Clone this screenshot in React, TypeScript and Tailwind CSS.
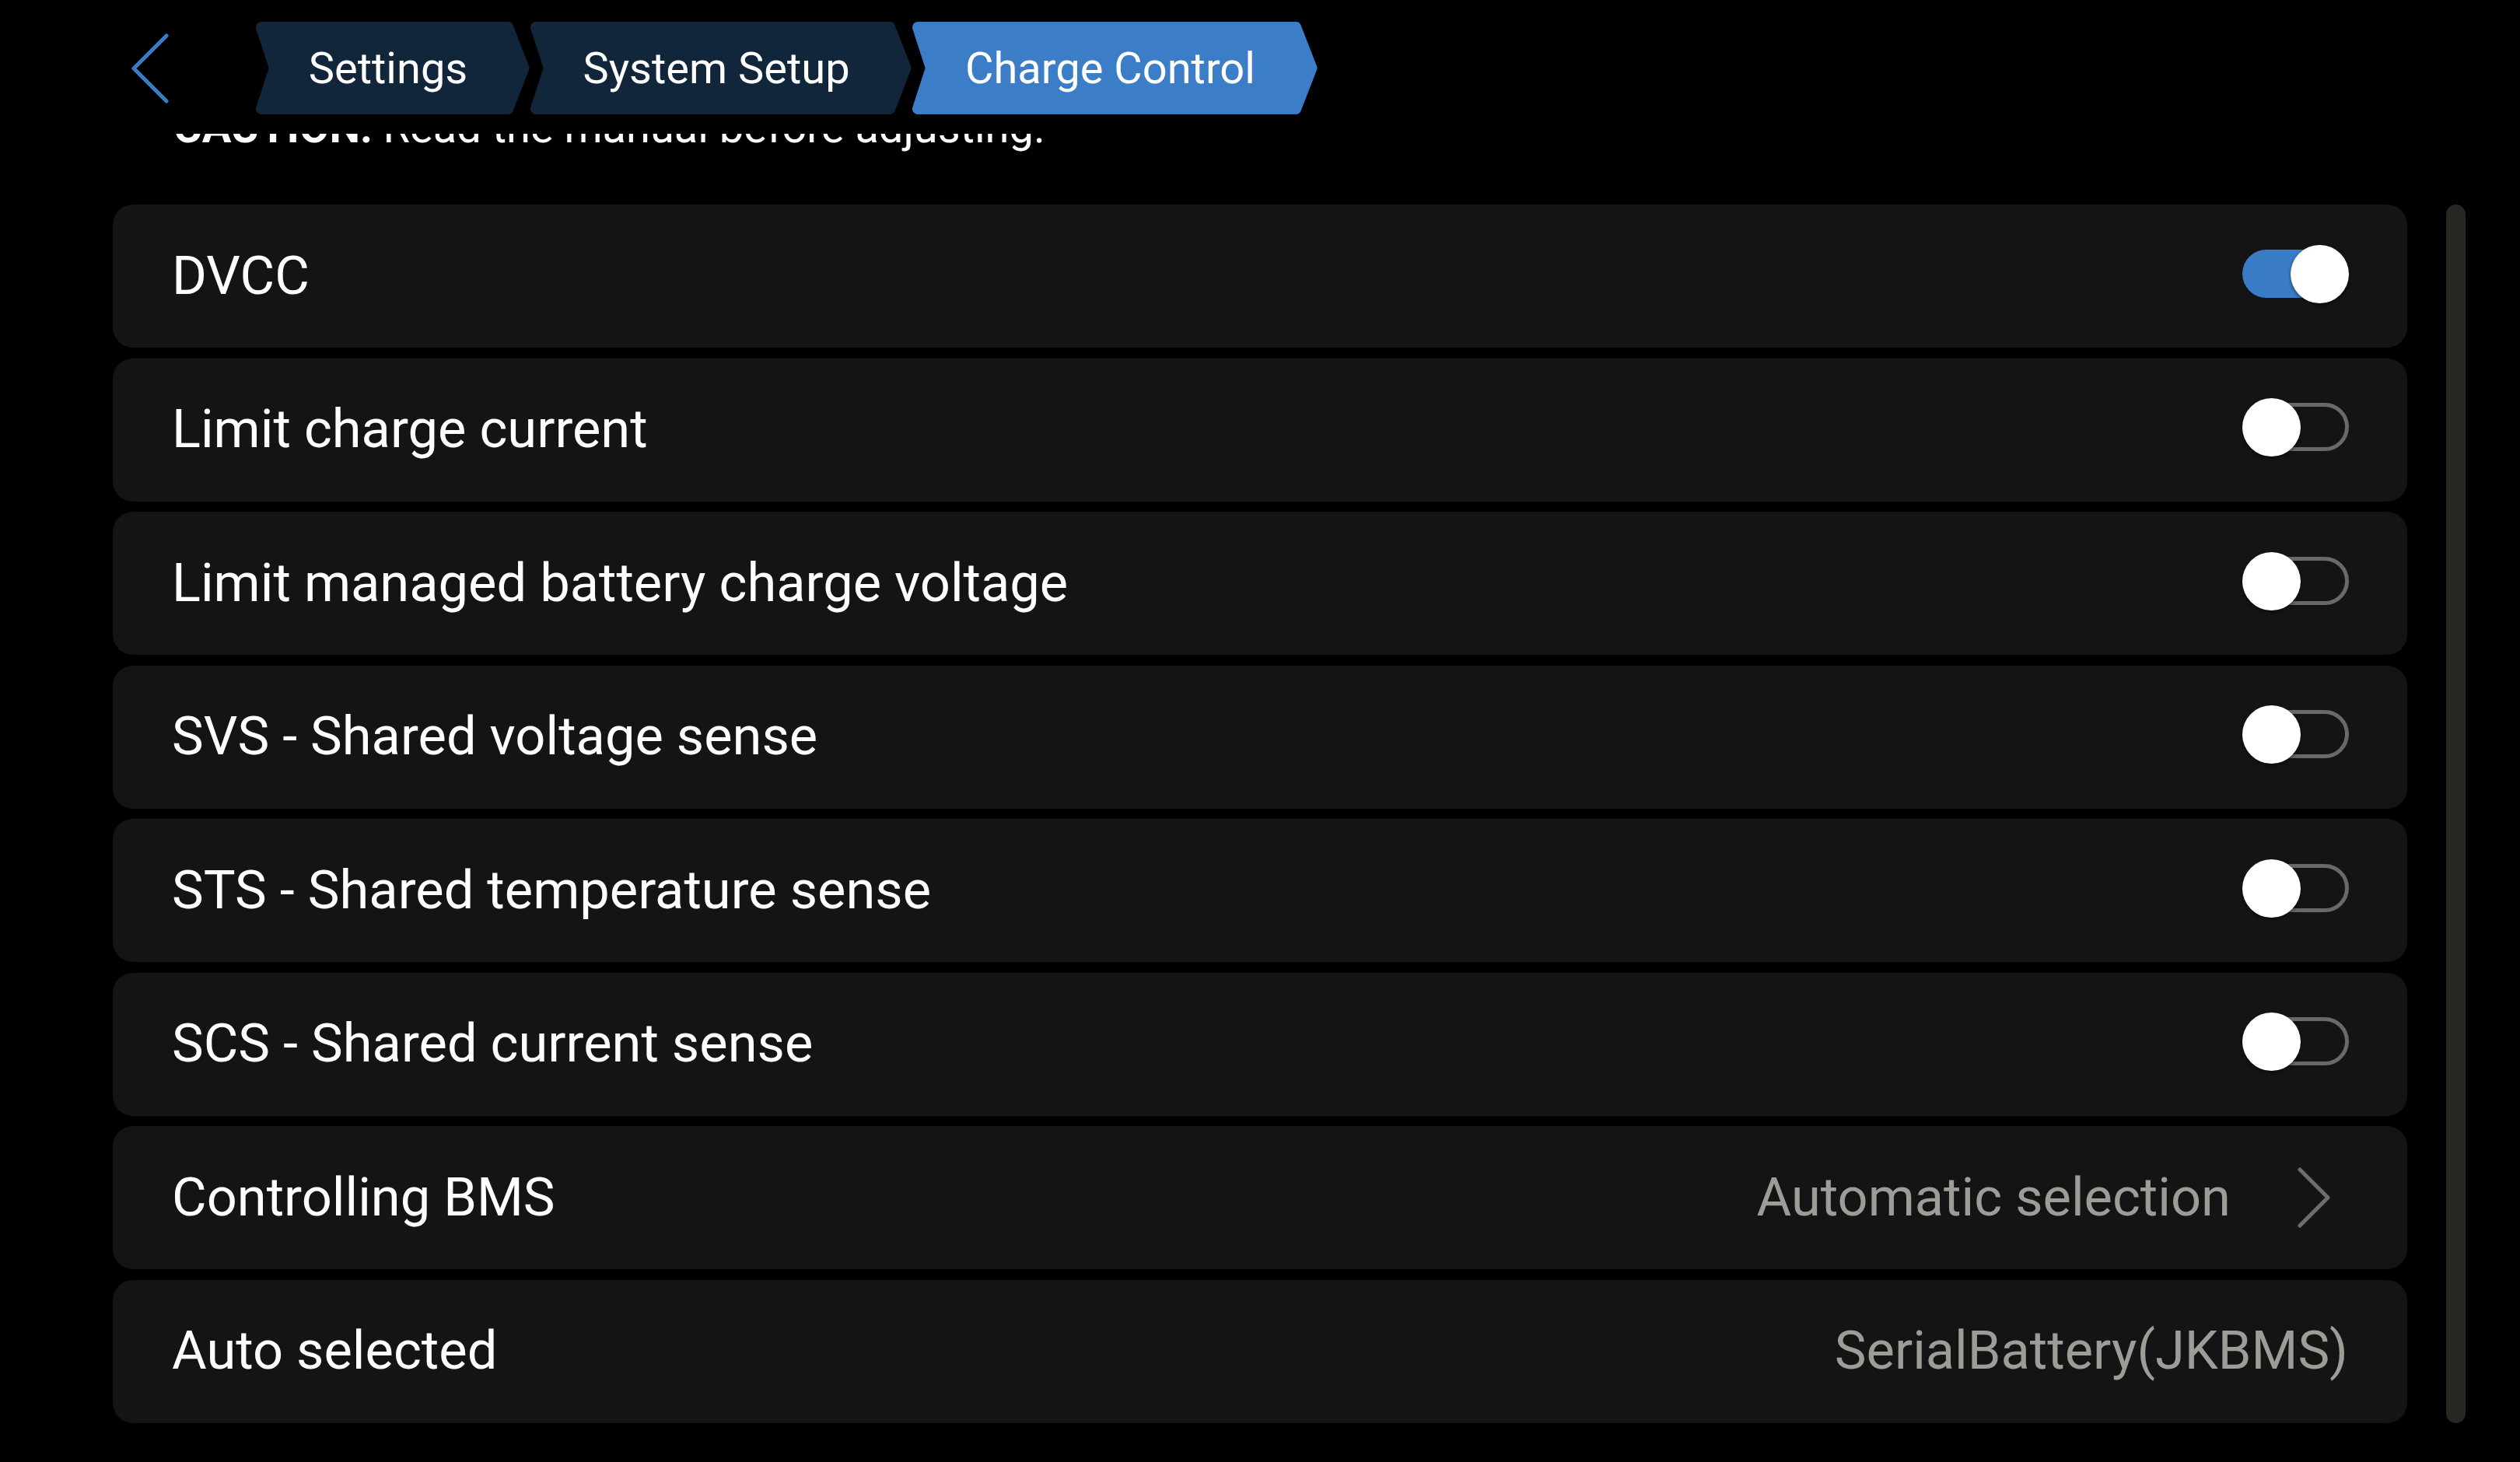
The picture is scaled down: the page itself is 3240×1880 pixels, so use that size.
import React from "react";

const FONT = { fontFamily: "Roboto, 'Noto Sans', 'Liberation Sans', sans-serif" };

function Tab({ label, width, active }: { label: string; width: number; active?: boolean }) {
  const H = 119;
  const n = 17;
  const t = 23;
  const r = 7;
  const pts = [
    [r, r],
    [n + r, H / 2],
    [r, H - r],
    [width - t - 0.7 * r, H - r],
    [width - 1.07 * r, H / 2],
    [width - t - 0.7 * r, r],
  ]
    .map((p) => p.join(","))
    .join(" ");
  const color = active ? "#3b7ec7" : "#12263b";
  return (
    <div className="relative h-[119px] flex items-center justify-center pl-[8px] pr-[20px]" style={{ width }}>
      <svg className="absolute inset-0" width={width} height={H} viewBox={`0 0 ${width} ${H}`}>
        <polygon points={pts} fill={color} stroke={color} strokeWidth={2 * r} strokeLinejoin="round" />
      </svg>
      <span className="relative text-[56px] leading-none text-white">{label}</span>
    </div>
  );
}

function Toggle({ on }: { on?: boolean }) {
  return (
    <div className="relative w-[137px] h-[75px] shrink-0 -mt-[6px]">
      {on ? (
        <div className="absolute left-0 top-[6px] w-[134px] h-[62px] rounded-full bg-[#3a7cc6]" />
      ) : (
        <div className="absolute left-0 top-[6px] w-[137px] h-[62px] rounded-full border-[5px] border-[#6a6965]" />
      )}
      <div
        className={
          "absolute top-0 w-[75px] h-[75px] rounded-full bg-white shadow-[0_2px_4px_rgba(0,0,0,0.5)] " +
          (on ? "right-0" : "left-0")
        }
      />
    </div>
  );
}

function Row({ children, label }: { children?: React.ReactNode; label: string }) {
  return (
    <div className="h-[184px] rounded-[26px] bg-[#141414] flex items-center justify-between pl-[76px] pr-[75px]">
      <span className="text-[68.6px] leading-none text-white">{label}</span>
      {children}
    </div>
  );
}

export default function App() {
  const toggles = [
    { label: "DVCC", on: true },
    { label: "Limit charge current" },
    { label: "Limit managed battery charge voltage" },
    { label: "SVS - Shared voltage sense" },
    { label: "STS - Shared temperature sense" },
    { label: "SCS - Shared current sense" },
  ];
  return (
    <div className="w-[3240px] h-[1880px] bg-black overflow-hidden flex flex-col" style={FONT}>
      <div className="h-[172px] shrink-0 flex items-start pt-[28px]">
        <div className="w-[329px] h-[119px] flex items-center pl-[166px]">
          <svg width="52" height="90" viewBox="0 0 52 90">
            <polyline points="48,3 6,45 48,87" fill="none" stroke="#3a7bc8" strokeWidth="5" strokeLinecap="round" strokeLinejoin="round" />
          </svg>
        </div>
        <div className="flex items-center">
          <Tab label="Settings" width={352} />
          <div className="w-[1px]" />
          <Tab label="System Setup" width={490} />
          <div className="w-[1px]" />
          <Tab label="Charge Control" width={521} active />
        </div>
      </div>
      <div className="h-[91px] shrink-0 overflow-hidden pl-[223px]">
        <div className="-mt-[41px] text-[56px] leading-[66px] text-white whitespace-nowrap">
          <span className="font-bold">CAUTION:</span> Read the manual before adjusting.
        </div>
      </div>
      <div className="flex pl-[145px] pr-[70px]">
        <div className="flex-1 flex flex-col gap-[13.5px]">
          {toggles.map((tg) => (
            <Row key={tg.label} label={tg.label}>
              <Toggle on={tg.on} />
            </Row>
          ))}
          <div className="h-[184px] rounded-[26px] bg-[#141414] flex items-center justify-between pl-[76px] pr-[99px]">
            <span className="text-[68.6px] leading-none text-white">Controlling BMS</span>
            <div className="flex items-center gap-[86px]">
              <span className="text-[68.6px] leading-none text-[#9d9c97]">Automatic selection</span>
              <svg width="42" height="78" viewBox="0 0 42 78">
                <polyline points="3,3 39,39 3,75" fill="none" stroke="#6e6d69" strokeWidth="5" strokeLinecap="round" strokeLinejoin="round" />
              </svg>
            </div>
          </div>
          <div className="h-[184px] rounded-[26px] bg-[#141414] flex items-center justify-between pl-[76px] pr-[76px]">
            <span className="text-[68.6px] leading-none text-white">Auto selected</span>
            <span className="text-[68.6px] leading-none text-[#9d9c97]">SerialBattery(JKBMS)</span>
          </div>
        </div>
        <div className="w-[25px] ml-[50px] rounded-full bg-[#282722]" />
      </div>
    </div>
  );
}
